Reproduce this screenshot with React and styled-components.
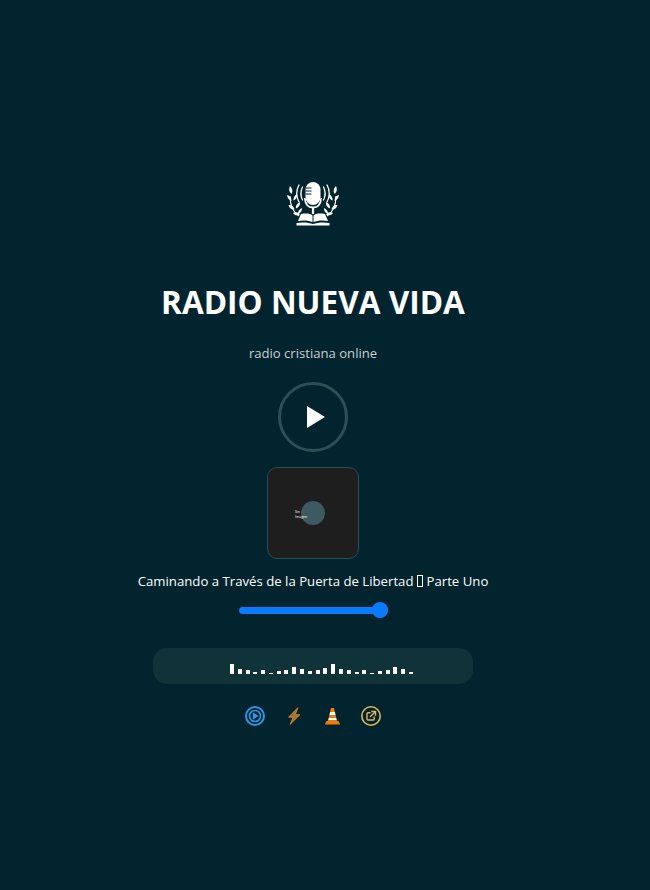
import React from "react";
import styled, { createGlobalStyle } from "styled-components";

const barHeights = [10, 5, 4, 2, 4, 1, 3, 4, 7, 5, 3, 4, 6, 10, 5, 4, 2, 4, 1, 3, 4, 7, 5, 2];

const GlobalStyle = createGlobalStyle`
  html, body {
    margin: 0;
    padding: 0;
    background: #01242e;
  }
`;

const leaves =
  "M3 5c2.500 2 3 5 1.500 8C2 11 1.500 8 3 5zM0 14c3 .5 4.500 3 4.500 6C2 19 .3 17 0 14zM10 13c.5 3-1 5.500-3.500 6.500C6 17 7.500 14.500 10 13zM1.500 24c3-.5 5.500 1.500 6 4.500-3 .5-5.500-1.500-6-4.500zM13 21c.5 3-1.500 5.500-4 6.500-.5-3 1.500-5.500 4-6.500zM6 32c2.500-1.500 5.500-1 7 1.500-2.500 1.500-5.500 1-7-1.500zM15 27c.3 3-1.500 5-4 6-.3-2.500 1.500-5 4-6z";

const Logo = () => (
  <svg width="52" height="46" viewBox="0 0 52 46" fill="none">
    <rect x="18.500" y="1" width="15" height="23" rx="7.500" fill="#fff" />
    <path d="M18.500 7h6M18.500 10h6M18.500 13h6" stroke="#01242e" strokeWidth="1.200" />
    <path d="M17.800 17c.5 6 3.500 9.500 8.200 9.500s7.700-3.500 8.200-9.500" stroke="#fff" strokeWidth="1.800" />
    <path d="M26 26v7" stroke="#fff" strokeWidth="2.200" />
    <path
      d="M15.500 6c-2 4-2 9 0 13M12 4c-3 5-3 12 0 17M36.500 6c2 4 2 9 0 13M40 4c3 5 3 12 0 17"
      stroke="#fff"
      strokeWidth="1.300"
      strokeLinecap="round"
    />
    <path d="M12 35C6 31 3 24 3 15M40 35c6-4 9-11 9-20" stroke="#fff" strokeWidth="1.100" />
    <path d={leaves} fill="#fff" />
    <path d={leaves} fill="#fff" transform="matrix(-1 0 0 1 52 0)" />
    <path d="M14 33c5-1 9.500-.5 11.500 1.500V41c-3.500-1.500-9-2-14.500-1zM38 33c-5-1-9.500-.5-11.500 1.500V41c3.500-1.500 9-2 14.500-1z" fill="#fff" />
    <path d="M9.500 42c6-1 12.500-.5 16.500 1 4-1.500 10.500-2 16.500-1v2.500h-33z" fill="#fff" />
  </svg>
);

const PlayRingIcon = () => (
  <svg width="20" height="20" viewBox="0 0 20 20" fill="none">
    <circle cx="10" cy="10" r="9" stroke="#2f96e6" strokeWidth="2" />
    <circle cx="10" cy="10" r="5.500" stroke="#2f96e6" strokeWidth="1.600" />
    <path d="M7.800 6.300v7.400l5.800-3.700z" fill="#2f96e6" />
  </svg>
);

const BoltIcon = () => (
  <svg width="14" height="18" viewBox="0 0 14 18" fill="none">
    <path
      d="M11 .5 1.500 10.200h4.700L3 17.500l10-9.800H8.300z"
      stroke="#ee962f"
      strokeWidth=".7"
      strokeLinejoin="round"
      fill="#ee962f"
      fillOpacity=".7"
    />
  </svg>
);

const ConeIcon = () => (
  <svg width="15" height="17" viewBox="0 0 15 17">
    <path d="M6 0h3l.9 4H5.100z" fill="#f57c00" />
    <path d="M5.100 4h4.800l.8 3.500H4.300z" fill="#fff" />
    <path d="M4.300 7.500h6.400l.6 2.500H3.700z" fill="#f57c00" />
    <path d="M3.700 10h7.600l.6 2.500H3.100z" fill="#fff" />
    <path d="M3.100 12.500 1 13.500 0 16.500h15l-1-3-2.100-1z" fill="#f57c00" />
  </svg>
);

const ExternalIcon = () => (
  <svg width="20" height="20" viewBox="0 0 20 20" fill="none">
    <circle cx="10" cy="10" r="9.200" stroke="#e2b55a" strokeWidth="1.600" />
    <path d="M9.500 6.800H7a1 1 0 0 0-1 1V13a1 1 0 0 0 1 1h5.200a1 1 0 0 0 1-1v-2.500" stroke="#e2b55a" strokeWidth="1.400" />
    <path d="M9 11l5-5M10.300 5.500h4.200v4.200" stroke="#e2b55a" strokeWidth="1.400" />
  </svg>
);

const App = () => {
  return (
    <>
      <GlobalStyle />
      <Page>
        <Player>
          <LogoWrap>
            <Logo />
          </LogoWrap>
          <Title>RADIO NUEVA VIDA</Title>
          <Subtitle>radio cristiana online</Subtitle>
          <PlayButton aria-label="play">
            <svg width="20" height="22" viewBox="0 0 20 22">
              <path d="M1 0v22l18-11z" fill="#fff" />
            </svg>
          </PlayButton>
          <Cover>
            <CoverDisc />
            <CoverAlt>
              Sin
              <br />
              Imagen
            </CoverAlt>
          </Cover>
          <TrackName>
            Caminando a Través de la Puerta de Libertad <Tofu /> Parte Uno
          </TrackName>
          <Volume>
            <VolumeThumb />
          </Volume>
          <VisualizerPanel>
            {barHeights.map((height, index) => (
              <Bar key={index} $height={height} />
            ))}
          </VisualizerPanel>
          <LinkRow>
            <LinkIcon><PlayRingIcon /></LinkIcon>
            <LinkIcon><BoltIcon /></LinkIcon>
            <LinkIcon><ConeIcon /></LinkIcon>
            <LinkIcon><ExternalIcon /></LinkIcon>
          </LinkRow>
        </Player>
      </Page>
    </>
  );
};

const Page = styled.div`
  min-height: 890px;
  box-sizing: border-box;
  background: #01242e;
  padding: 181px 24px 0 0;
  font-family: "Open Sans", "Noto Sans", sans-serif;
  color: #fff;
`;

const Player = styled.div`
  display: flex;
  flex-direction: column;
  align-items: center;
`;

const LogoWrap = styled.div`
  height: 46px;
  display: flex;
  justify-content: center;
`;

const Title = styled.h1`
  margin: 53px 0 0;
  font-size: 31.600px;
  line-height: 44px;
  font-weight: 700;
  white-space: nowrap;
`;

const Subtitle = styled.p`
  margin: 20px 0 0;
  font-size: 13.100px;
  line-height: 18px;
  color: #c8d0d3;
`;

const PlayButton = styled.button`
  margin-top: 20px;
  width: 70px;
  height: 70px;
  box-sizing: border-box;
  border: 3px solid #2f4f57;
  border-radius: 50%;
  background: transparent;
  padding: 0 0 0 5px;
  display: flex;
  align-items: center;
  justify-content: center;
`;

const Cover = styled.div`
  position: relative;
  margin-top: 15px;
  width: 92px;
  height: 92px;
  box-sizing: border-box;
  background: #1e1e1e;
  border: 1px solid #2d4c55;
  border-radius: 10px;
  display: flex;
  align-items: center;
  justify-content: center;
`;

const CoverDisc = styled.div`
  width: 24px;
  height: 24px;
  border-radius: 50%;
  background: #3d5a62;
`;

const CoverAlt = styled.div`
  position: absolute;
  left: 27px;
  top: 41px;
  font-size: 3.500px;
  line-height: 5px;
  color: #fff;
`;

const TrackName = styled.div`
  margin-top: 13px;
  font-size: 13.200px;
  line-height: 18px;
  white-space: nowrap;
  display: flex;
  align-items: center;
  gap: 3.500px;
`;

const Tofu = styled.span`
  display: inline-block;
  width: 6px;
  height: 12px;
  box-sizing: border-box;
  border: 1px solid #fff;
`;

const Volume = styled.div`
  position: relative;
  margin-top: 12px;
  width: 149px;
  height: 16px;
  display: flex;
  align-items: center;

  &::before {
    content: "";
    width: 100%;
    height: 7px;
    border-radius: 4px;
    background: #0a7bff;
  }
`;

const VolumeThumb = styled.span`
  position: absolute;
  right: 0;
  top: 0;
  width: 16px;
  height: 16px;
  border-radius: 50%;
  background: #0a7bff;
`;

const VisualizerPanel = styled.div`
  margin-top: 30px;
  width: 320px;
  height: 36px;
  box-sizing: border-box;
  padding: 0 60px 10px 77px;
  border-radius: 14px;
  background: #0f3339;
  display: flex;
  align-items: flex-end;
  justify-content: space-between;
`;

const Bar = styled.span.attrs((props) => ({
  style: { height: `${props.$height}px` },
}))`
  width: 4px;
  background: #fff;
`;

const LinkRow = styled.div`
  margin-top: 22px;
  display: flex;
  align-items: center;
  gap: 18.500px;
`;

const LinkIcon = styled.span`
  width: 20px;
  height: 20px;
  display: flex;
  align-items: center;
  justify-content: center;
`;

export default App;
